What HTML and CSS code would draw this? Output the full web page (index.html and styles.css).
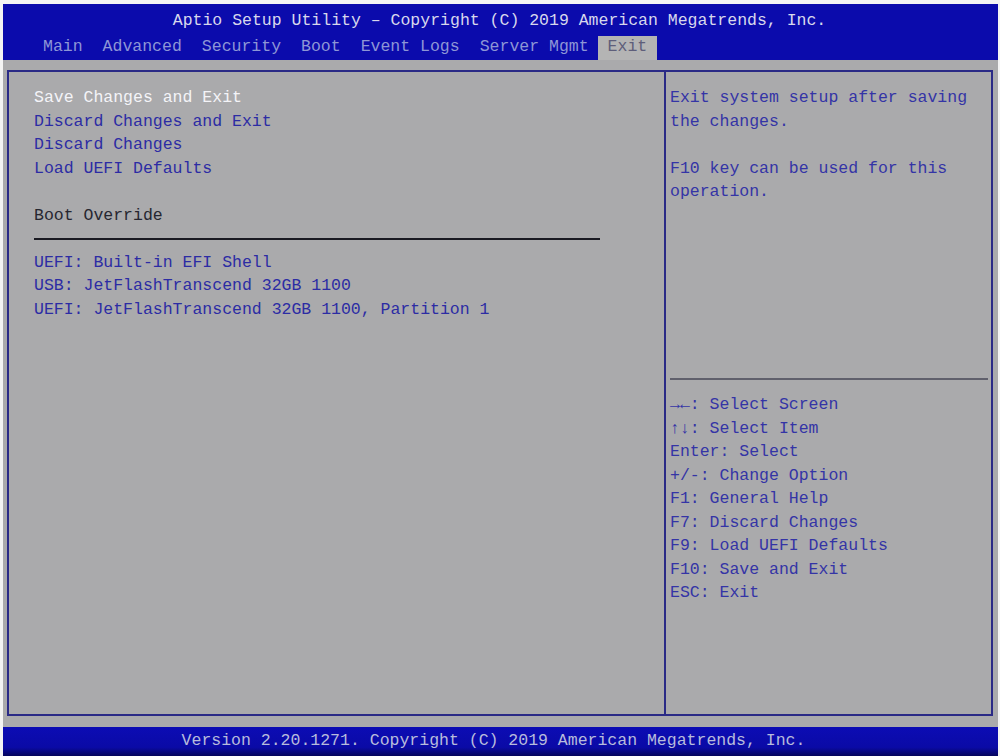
FILE: index.html
```html
<!DOCTYPE html>
<html>
<head>
<meta charset="utf-8">
<link rel="stylesheet" href="styles.css">
</head>
<body>
<div class="screen">
  <header class="header">
    <div class="title">Aptio Setup Utility – Copyright (C) 2019 American Megatrends, Inc.</div>
    <nav class="tabs">
      <span class="tab">Main</span>
      <span class="tab">Advanced</span>
      <span class="tab">Security</span>
      <span class="tab">Boot</span>
      <span class="tab">Event Logs</span>
      <span class="tab">Server Mgmt</span>
      <span class="tab active">Exit</span>
    </nav>
  </header>
  <main class="body">
    <div class="frame">
      <section class="left">
        <div class="item selected">Save Changes and Exit</div>
        <div class="item">Discard Changes and Exit</div>
        <div class="item">Discard Changes</div>
        <div class="item">Load UEFI Defaults</div>
        <div class="blank"></div>
        <div class="label">Boot Override</div>
        <div class="sep"></div>
        <div class="item">UEFI: Built-in EFI Shell</div>
        <div class="item">USB: JetFlashTranscend 32GB 1100</div>
        <div class="item">UEFI: JetFlashTranscend 32GB 1100, Partition 1</div>
      </section>
      <aside class="right">
        <div class="help">
          <div class="line">Exit system setup after saving</div>
          <div class="line">the changes.</div>
          <div class="blank"></div>
          <div class="line">F10 key can be used for this</div>
          <div class="line">operation.</div>
        </div>
        <div class="keys">
          <div class="line">→←: Select Screen</div>
          <div class="line">↑↓: Select Item</div>
          <div class="line">Enter: Select</div>
          <div class="line">+/-: Change Option</div>
          <div class="line">F1: General Help</div>
          <div class="line">F7: Discard Changes</div>
          <div class="line">F9: Load UEFI Defaults</div>
          <div class="line">F10: Save and Exit</div>
          <div class="line">ESC: Exit</div>
        </div>
      </aside>
    </div>
  </main>
  <footer class="footer">Version 2.20.1271. Copyright (C) 2019 American Megatrends, Inc.</footer>
</div>
</body>
</html>
```
FILE: styles.css
```css
html, body {
  margin: 0;
  padding: 0;
  background: #f4f4f4;
}
body {
  width: 1000px;
  height: 756px;
  overflow: hidden;
  font-family: "Liberation Mono", "DejaVu Sans Mono", monospace;
  font-size: 16.5px;
}
.screen {
  margin: 4px 2px 4px 3px;
  height: 752px;
  display: flex;
  flex-direction: column;
  background: #aaaaac;
}
.header {
  height: 56px;
  background: #0b0bac;
  display: flex;
  flex-direction: column;
}
.title {
  height: 32px;
  line-height: 34px;
  text-align: center;
  color: #d8d8ec;
  padding-right: 2px;
}
.tabs {
  display: flex;
  height: 24px;
  padding-left: 30px;
  align-items: stretch;
}
.tab {
  padding: 0 10px;
  line-height: 22px;
  color: #8e96d6;
}
.tab.active {
  background: #b4b4b4;
  color: #5e5e7a;
  margin-left: -1px;
}
.body {
  flex: 1;
  padding: 10px 5px 11px 4px;
  display: flex;
}
.frame {
  flex: 1;
  display: flex;
  border: 2px solid #2a2a86;
}
.left {
  width: 630px;
  padding: 14px 0 0 25px;
  border-right: 2px solid #2a2a86;
  line-height: 23.5px;
}
.item {
  color: #2c2ca4;
  white-space: pre;
}
.item.selected {
  color: #f4f4f8;
}
.label {
  color: #262630;
}
.blank {
  height: 23.5px;
}
.sep {
  height: 23.5px;
  width: 566px;
  display: flex;
  align-items: center;
}
.sep::before {
  content: "";
  display: block;
  width: 100%;
  height: 2px;
  background: #1a1a22;
}
.right {
  flex: 1;
  display: flex;
  flex-direction: column;
  line-height: 23.5px;
  color: #3434a6;
}
.help {
  height: 292px;
  padding: 14px 0 0 0;
  border-bottom: 2px solid #60606c;
  margin: 0 3px 0 4px;
}
.keys {
  padding: 13px 0 0 4px;
}
.line {
  white-space: pre;
}
.footer {
  height: 29px;
  background: linear-gradient(#0c0cb4 0%, #0a0aa6 70%, #05055c 100%);
  color: #b8bcdc;
  text-align: center;
  line-height: 28px;
  padding-right: 14px;
}
```
